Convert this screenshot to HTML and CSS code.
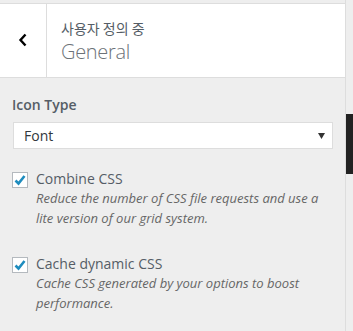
FILE: index.html
```html
<!DOCTYPE html>
<html>
<head>
<meta charset="utf-8">
<link rel="stylesheet" href="styles.css">
</head>
<body>
<div class="page">
  <div class="panel">
    <div class="top-strip"></div>
    <div class="header">
      <button class="back" aria-label="Back">
        <svg width="10" height="14" viewBox="0 0 10 14"><polyline points="7.5,1.5 2.5,7 7.5,12.5" fill="none" stroke="#000" stroke-width="2.4"/></svg>
      </button>
      <div class="title">
        <div class="crumb">사용자 정의 중</div>
        <div class="heading">General</div>
      </div>
    </div>
    <div class="content">
      <div class="field">
        <div class="field-label">Icon Type</div>
        <div class="select">
          <span>Font</span>
          <svg width="7" height="6" viewBox="0 0 7 6"><polygon points="0,0 7,0 3.5,6" fill="#333"/></svg>
        </div>
      </div>
      <div class="check-row">
        <span class="box"><svg width="14" height="14" viewBox="0 0 14 14"><polyline points="2.5,7.5 5.5,10.5 11.5,3" fill="none" stroke="#1e8cbe" stroke-width="2.6"/></svg></span>
        <div class="check-text">
          <div class="check-label">Combine CSS</div>
          <div class="desc">Reduce the number of CSS file requests and use a lite version of our grid system.</div>
        </div>
      </div>
      <div class="check-row">
        <span class="box"><svg width="14" height="14" viewBox="0 0 14 14"><polyline points="2.5,7.5 5.5,10.5 11.5,3" fill="none" stroke="#1e8cbe" stroke-width="2.6"/></svg></span>
        <div class="check-text">
          <div class="check-label">Cache dynamic CSS</div>
          <div class="desc">Cache CSS generated by your options to boost performance.</div>
        </div>
      </div>
    </div>
  </div>
  <div class="gutter">
    <div class="thumb"></div>
  </div>
</div>
</body>
</html>
```
FILE: styles.css
```css
html, body {
  margin: 0;
  padding: 0;
  background: #eeeeee;
}
body {
  font-family: "Open Sans", "Noto Sans CJK KR", sans-serif;
  color: #555d66;
}
.page {
  display: flex;
  width: 353px;
  height: 331px;
  overflow: hidden;
}
.panel {
  width: 345px;
  border-right: 1px solid #dddddd;
  display: flex;
  flex-direction: column;
}
.top-strip {
  height: 3px;
  border-bottom: 1px solid #dddddd;
}
.header {
  display: flex;
  height: 73px;
  background: #ffffff;
  border-bottom: 1px solid #dddddd;
}
.back {
  width: 47px;
  border: 0;
  border-right: 1px solid #dddddd;
  background: #ffffff;
  padding: 0 0 1px 0;
  display: flex;
  align-items: center;
  justify-content: center;
}
.title {
  padding: 14px 0 0 14px;
}
.crumb {
  font-family: "Noto Sans CJK KR", sans-serif;
  font-size: 14px;
  line-height: 20px;
  color: #555d66;
}
.heading {
  font-size: 20px;
  font-weight: 300;
  line-height: 28px;
  letter-spacing: -0.3px;
  color: #6c7278;
}
.content {
  padding: 17px 12px 0 12px;
}
.field-label {
  font-size: 14px;
  font-weight: 600;
  line-height: 20px;
  margin-bottom: 7px;
}
.select {
  margin-left: 1px;
  height: 25px;
  background: #ffffff;
  border: 1px solid #dddddd;
  display: flex;
  align-items: center;
  justify-content: space-between;
  padding: 0 7px 0 10px;
  font-size: 14px;
  color: #32373c;
}
.check-row {
  display: flex;
  gap: 8px;
  margin-top: 21px;
}
.check-row + .check-row {
  margin-top: 27px;
}
.box {
  flex: none;
  width: 14px;
  height: 14px;
  margin-top: 2px;
  background: #ffffff;
  border: 1px solid #b4b9be;
  display: flex;
}
.check-label {
  font-size: 14px;
  line-height: 18px;
}
.desc {
  font-size: 13px;
  font-style: italic;
  line-height: 20px;
  color: #666666;
}
.gutter {
  flex: 1;
}
.thumb {
  margin-top: 114px;
  height: 60px;
  background: #222222;
}
```
